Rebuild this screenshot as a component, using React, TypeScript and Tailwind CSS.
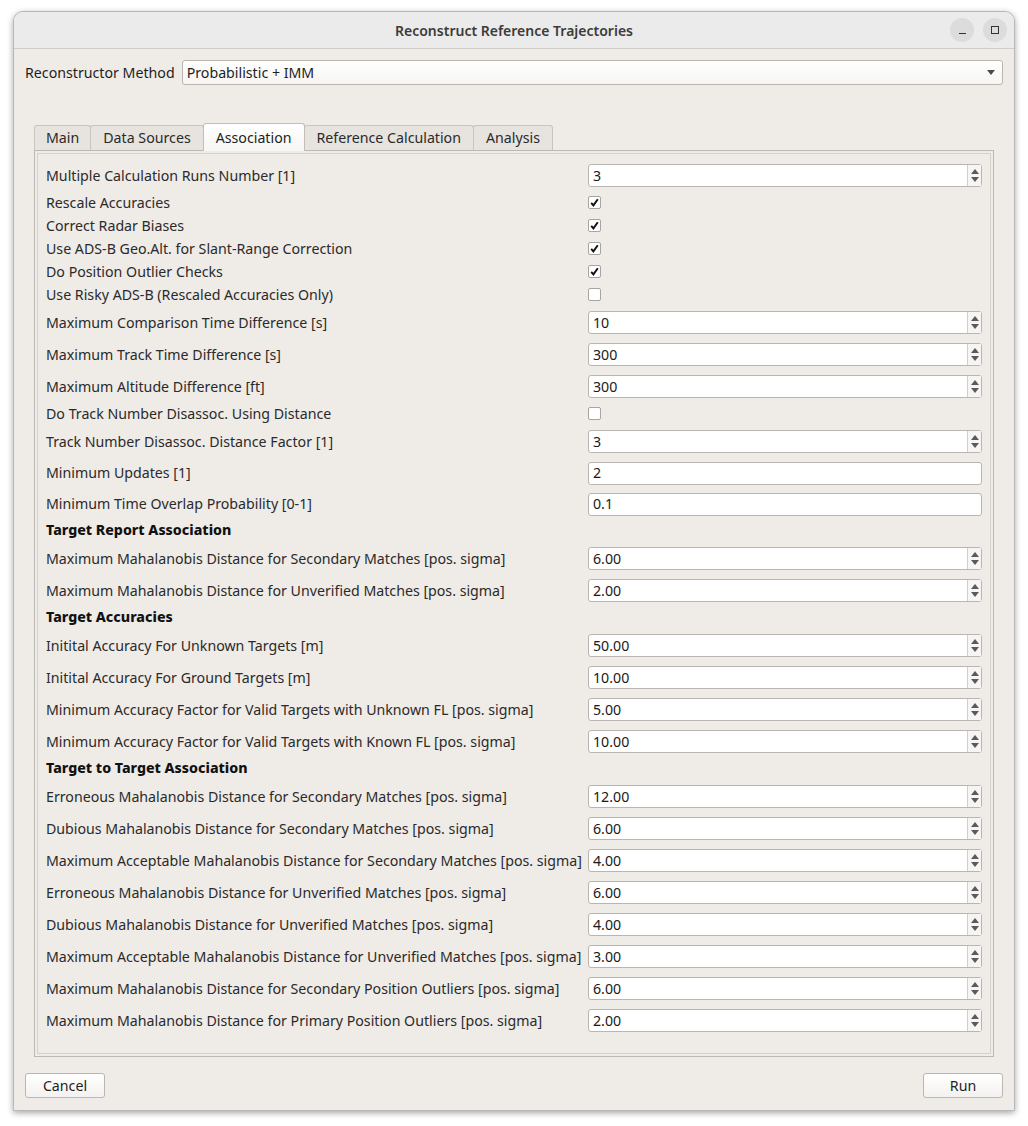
import React from "react";

type Row =
  | { kind: "spin"; label: string; value: string }
  | { kind: "edit"; label: string; value: string }
  | { kind: "check"; label: string; checked: boolean }
  | { kind: "head"; label: string };

const rows: Row[] = [
  { kind: "spin", label: "Multiple Calculation Runs Number [1]", value: "3" },
  { kind: "check", label: "Rescale Accuracies", checked: true },
  { kind: "check", label: "Correct Radar Biases", checked: true },
  { kind: "check", label: "Use ADS-B Geo.Alt. for Slant-Range Correction", checked: true },
  { kind: "check", label: "Do Position Outlier Checks", checked: true },
  { kind: "check", label: "Use Risky ADS-B (Rescaled Accuracies Only)", checked: false },
  { kind: "spin", label: "Maximum Comparison Time Difference [s]", value: "10" },
  { kind: "spin", label: "Maximum Track Time Difference [s]", value: "300" },
  { kind: "spin", label: "Maximum Altitude Difference [ft]", value: "300" },
  { kind: "check", label: "Do Track Number Disassoc. Using Distance", checked: false },
  { kind: "spin", label: "Track Number Disassoc. Distance Factor [1]", value: "3" },
  { kind: "edit", label: "Minimum Updates [1]", value: "2" },
  { kind: "edit", label: "Minimum Time Overlap Probability [0-1]", value: "0.1" },
  { kind: "head", label: "Target Report Association" },
  { kind: "spin", label: "Maximum Mahalanobis Distance for Secondary Matches [pos. sigma]", value: "6.00" },
  { kind: "spin", label: "Maximum Mahalanobis Distance for Unverified Matches [pos. sigma]", value: "2.00" },
  { kind: "head", label: "Target Accuracies" },
  { kind: "spin", label: "Initital Accuracy For Unknown Targets [m]", value: "50.00" },
  { kind: "spin", label: "Initital Accuracy For Ground Targets [m]", value: "10.00" },
  { kind: "spin", label: "Minimum Accuracy Factor for Valid Targets with Unknown FL [pos. sigma]", value: "5.00" },
  { kind: "spin", label: "Minimum Accuracy Factor for Valid Targets with Known FL [pos. sigma]", value: "10.00" },
  { kind: "head", label: "Target to Target Association" },
  { kind: "spin", label: "Erroneous Mahalanobis Distance for Secondary Matches [pos. sigma]", value: "12.00" },
  { kind: "spin", label: "Dubious Mahalanobis Distance for Secondary Matches [pos. sigma]", value: "6.00" },
  { kind: "spin", label: "Maximum Acceptable Mahalanobis Distance for Secondary Matches [pos. sigma]", value: "4.00" },
  { kind: "spin", label: "Erroneous Mahalanobis Distance for Unverified Matches [pos. sigma]", value: "6.00" },
  { kind: "spin", label: "Dubious Mahalanobis Distance for Unverified Matches [pos. sigma]", value: "4.00" },
  { kind: "spin", label: "Maximum Acceptable Mahalanobis Distance for Unverified Matches [pos. sigma]", value: "3.00" },
  { kind: "spin", label: "Maximum Mahalanobis Distance for Secondary Position Outliers [pos. sigma]", value: "6.00" },
  { kind: "spin", label: "Maximum Mahalanobis Distance for Primary Position Outliers [pos. sigma]", value: "2.00" },
];

const tabs = ["Main", "Data Sources", "Association", "Reference Calculation", "Analysis"];

function SpinBox({ value }: { value: string }) {
  return (
    <div className="flex h-[23px] w-full rounded-[3px] border border-[#b9b5b1] bg-white">
      <div className="flex flex-1 items-center pl-[4px] text-[#1a1a1a]">{value}</div>
      <div className="flex w-[14px] flex-col items-center justify-center gap-[3px] border-l border-[#d2cfcb] bg-[#f6f5f4]">
        <svg width="8" height="5" viewBox="0 0 8 5">
          <path d="M4 0 L8 5 L0 5 Z" fill="#5a5a5a" />
        </svg>
        <svg width="8" height="5" viewBox="0 0 8 5">
          <path d="M0 0 L8 0 L4 5 Z" fill="#5a5a5a" />
        </svg>
      </div>
    </div>
  );
}

function CheckBox({ checked }: { checked: boolean }) {
  return (
    <div className="-mt-[1px] flex h-[13px] w-[13px] items-center justify-center rounded-[2px] border border-[#a8a4a0] bg-white">
      {checked && (
        <svg width="9" height="9" viewBox="0 0 9 9">
          <path d="M1.2 4.8 L3.4 7.4 L7.8 1.2" fill="none" stroke="#111" strokeWidth="1.9" />
        </svg>
      )}
    </div>
  );
}

export default function App() {
  return (
    <div
      className="h-[1126px] w-[1028px] bg-white pl-[13px] pt-[11px] text-[14.2px] text-[#2e2e2e]"
      style={{ fontFamily: '"Noto Sans", "Open Sans", sans-serif' }}
    >
      <div className="flex h-[1100px] w-[1002px] flex-col overflow-hidden rounded-t-[10px] border border-[#b8b8b8] bg-[#efebe7] shadow-[0_2px_6px_rgba(0,0,0,0.35)]">
        {/* Title bar */}
        <div className="relative flex h-[37px] items-center justify-center border-b border-[#cfcdca] bg-[#ebebeb]">
          <span className="text-[14px] font-semibold text-[#3b3b3b]">Reconstruct Reference Trajectories</span>
          <div className="absolute right-[7px] top-[6px] flex gap-[9px]">
            <div className="flex h-[24px] w-[24px] items-end justify-center rounded-full bg-[#dcdcdc] pb-[8px]">
              <div className="h-[1px] w-[7px] bg-[#333]" />
            </div>
            <div className="flex h-[24px] w-[24px] items-center justify-center rounded-full bg-[#dcdcdc]">
              <div className="h-[8px] w-[8px] border border-[#333]" />
            </div>
          </div>
        </div>

        {/* Body */}
        <div className="flex flex-1 flex-col px-[11px] pt-[11px]">
          <div className="flex items-center gap-[7px]">
            <span className="text-[#1e1e1e]">Reconstructor Method</span>
            <div className="flex h-[25px] flex-1 items-center justify-between rounded-[3px] border border-[#b9b5b1] bg-gradient-to-b from-white to-[#f6f5f3] pl-[4px] pr-[7px]">
              <span className="text-[#1e1e1e]">Probabilistic + IMM</span>
              <svg width="8" height="5" viewBox="0 0 8 5">
                <path d="M0 0 L8 0 L4 5 Z" fill="#4a4a4a" />
              </svg>
            </div>
          </div>

          {/* Tab widget */}
          <div className="mx-[9px] mt-[38px] flex flex-col">
            <div className="flex items-end">
              {tabs.map((t) => {
                const active = t === "Association";
                return active ? (
                  <div
                    key={t}
                    className="relative z-10 -mb-[1px] -ml-[1px] flex h-[28px] items-center rounded-t-[3px] border border-b-0 border-[#c2beba] bg-gradient-to-b from-white to-[#f7f6f4] px-[12px] text-[#1e1e1e]"
                  >
                    {t}
                  </div>
                ) : (
                  <div
                    key={t}
                    className="-ml-[1px] flex h-[25px] items-center rounded-t-[3px] border border-b-0 border-[#c8c4c0] bg-[#e7e3df] px-[12px] text-[#2a2a2a] first:ml-0 first:px-[11px]"
                  >
                    {t}
                  </div>
                );
              })}
            </div>
            <div className="h-[907px] border border-[#bcb8b4] bg-[#efebe7] p-[2px]">
              <div className="h-full border border-[#d4d0cc] px-[8px] pt-[10px]">
                <div className="grid grid-cols-[534px_1fr] gap-x-[8px] gap-y-[9px]">
                  {rows.map((r, i) => {
                    if (r.kind === "head") {
                      return (
                        <div key={i} className="relative -top-[1px] col-span-2 flex h-[14px] items-center font-extrabold text-[#111]">
                          {r.label}
                        </div>
                      );
                    }
                    const h = r.kind === "spin" ? "h-[23px]" : r.kind === "edit" ? "h-[22px]" : "h-[14px]";
                    return (
                      <React.Fragment key={i}>
                        <div className={`flex ${h} items-center whitespace-nowrap text-[#2a2a2a]`}>{r.label}</div>
                        <div className={`flex ${h} items-center`}>
                          {r.kind === "spin" && <SpinBox value={r.value} />}
                          {r.kind === "edit" && (
                            <div className="flex h-[23px] w-full items-center rounded-[3px] border border-[#b9b5b1] bg-white pl-[4px] text-[#1a1a1a]">
                              {r.value}
                            </div>
                          )}
                          {r.kind === "check" && <CheckBox checked={r.checked} />}
                        </div>
                      </React.Fragment>
                    );
                  })}
                </div>
              </div>
            </div>
          </div>

          {/* Buttons */}
          <div className="mt-[16px] flex justify-between">
            <div className="flex h-[25px] w-[80px] items-center justify-center rounded-[3px] border border-[#bab6b2] bg-gradient-to-b from-white to-[#f4f2f0] text-[#1e1e1e]">
              Cancel
            </div>
            <div className="flex h-[25px] w-[80px] items-center justify-center rounded-[3px] border border-[#bab6b2] bg-gradient-to-b from-white to-[#f4f2f0] text-[#1e1e1e]">
              Run
            </div>
          </div>
        </div>
      </div>
    </div>
  );
}
